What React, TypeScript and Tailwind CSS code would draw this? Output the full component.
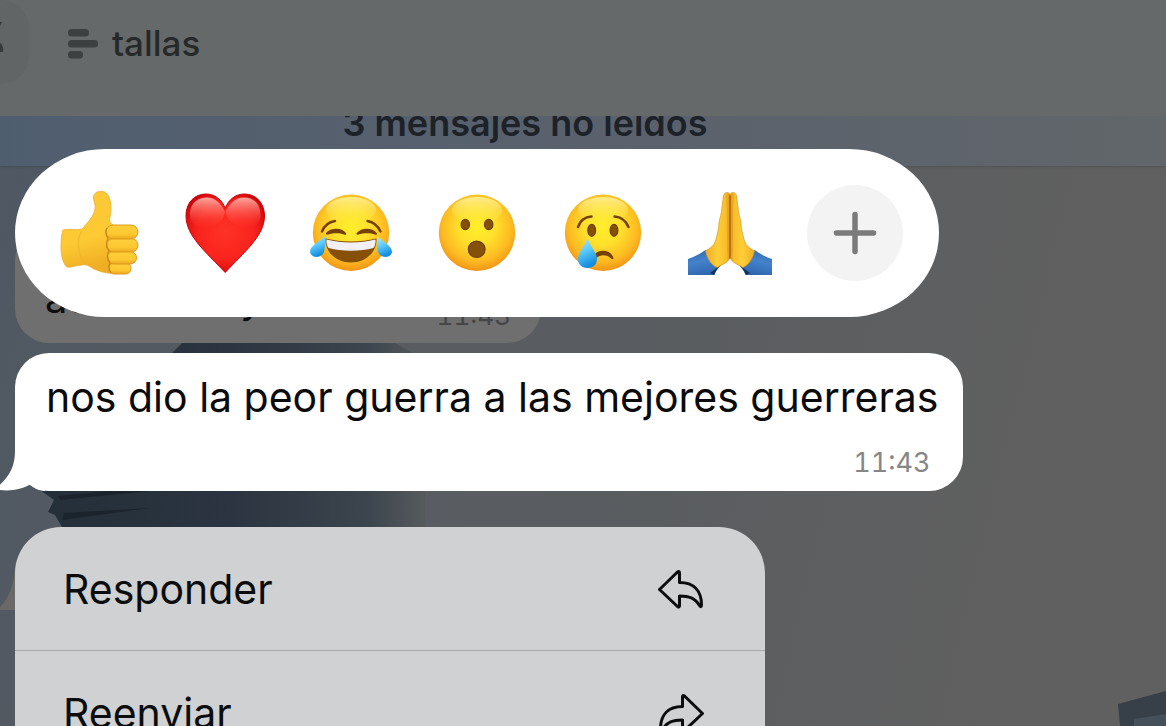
import type { ReactNode } from "react";

function Emoji({ children }: { children: ReactNode }) {
  return (
    <svg viewBox="0 0 84 84" className="size-[84px] overflow-visible" aria-hidden="true">
      {children}
    </svg>
  );
}

function Defs() {
  return (
    <svg className="absolute size-0" aria-hidden="true">
      <defs>
        <radialGradient id="face" cx="0.5" cy="0.42" r="0.6">
          <stop offset="0" stopColor="#ffee2b" />
          <stop offset="0.4" stopColor="#fee02b" />
          <stop offset="0.75" stopColor="#fcbb22" />
          <stop offset="0.93" stopColor="#f49c17" />
          <stop offset="1" stopColor="#e98811" />
        </radialGradient>
        <linearGradient id="shine" x1="0" y1="0" x2="0" y2="1">
          <stop offset="0" stopColor="#fff6a8" stopOpacity="0.8" />
          <stop offset="1" stopColor="#ffee50" stopOpacity="0" />
        </linearGradient>
        <linearGradient id="skin" x1="0" y1="0" x2="0.2" y2="1">
          <stop offset="0" stopColor="#fbc838" />
          <stop offset="0.65" stopColor="#fdca33" />
          <stop offset="1" stopColor="#f0ae24" />
        </linearGradient>
        <linearGradient id="finger" x1="0" y1="0" x2="0" y2="1">
          <stop offset="0" stopColor="#fdcf3a" />
          <stop offset="0.65" stopColor="#fdc832" />
          <stop offset="1" stopColor="#eba71f" />
        </linearGradient>
        <radialGradient id="heart" cx="0.5" cy="0.48" r="0.6">
          <stop offset="0" stopColor="#ff3226" />
          <stop offset="0.6" stopColor="#f9231d" />
          <stop offset="0.9" stopColor="#d90b0d" />
          <stop offset="1" stopColor="#bd0209" />
        </radialGradient>
        <linearGradient id="gloss" x1="0" y1="0" x2="0" y2="1">
          <stop offset="0" stopColor="#ffb9b0" stopOpacity="0.9" />
          <stop offset="0.5" stopColor="#ff7066" stopOpacity="0.55" />
          <stop offset="1" stopColor="#ff3a30" stopOpacity="0" />
        </linearGradient>
        <linearGradient id="tear" x1="0" y1="0" x2="0.3" y2="1">
          <stop offset="0" stopColor="#b5ecff" />
          <stop offset="0.5" stopColor="#5ccbfa" />
          <stop offset="1" stopColor="#138de0" />
        </linearGradient>
        <linearGradient id="sleeve" x1="0" y1="0" x2="0.3" y2="1">
          <stop offset="0" stopColor="#2d66ad" />
          <stop offset="0.5" stopColor="#4383cc" />
          <stop offset="1" stopColor="#3169b0" />
        </linearGradient>
        <linearGradient id="palm" x1="0" y1="0" x2="1" y2="0">
          <stop offset="0" stopColor="#eead25" />
          <stop offset="0.5" stopColor="#fecf37" />
          <stop offset="0.85" stopColor="#f9bd2a" />
          <stop offset="1" stopColor="#d99018" />
        </linearGradient>
      </defs>
    </svg>
  );
}

function Face() {
  return (
    <>
      <circle cx="41" cy="41.7" r="38.2" fill="url(#face)" />
      <ellipse cx="41" cy="19" rx="25" ry="13" fill="url(#shine)" />
    </>
  );
}

function ThumbsUp() {
  return (
    <Emoji>
      <path
        d="M5 39C10 37 18 40 24 38C30 31 36 25 37 18C38 12 34 8 36 4C38 0 44-1 48 2C53 6 54 17 52 26C51 30 52 32 55 34L60 52L58 82C50 83 43 81 36 78C31 75 28 73 24 74C18 74 14 77 9 76C5 73 3 64 3 56C3 49 4 41 5 39Z"
        fill="url(#skin)"
        stroke="#ecad2b"
        strokeWidth="0.8"
      />
      <path d="M24 40C18 48 20 65 27 73" fill="none" stroke="#eeb12a" strokeWidth="1.5" opacity="0.6" />
      <g fill="url(#finger)" stroke="#dd9a1c" strokeWidth="1">
        <rect x="50.5" y="72" width="22.5" height="11" rx="5.5" />
        <rect x="49" y="60.5" width="29.5" height="12.5" rx="6.2" />
        <rect x="48.5" y="47.5" width="31.5" height="13.5" rx="6.7" />
        <rect x="48" y="34" width="32" height="14" rx="7" />
      </g>
      <path
        d="M49 37C46 42 49 45 50 48C47 53 49 57 51 60C48 65 50 69 52 72C50 76 51 79 53 82"
        fill="none"
        stroke="#c98216"
        strokeWidth="1.2"
      />
    </Emoji>
  );
}

function Heart() {
  return (
    <Emoji>
      <path
        d="M41.2 17.5C38 8 30 3 22 3C10 3 2 12 2 25C2 45 22 61 41.2 81.500C60 61 80.500 45 80.500 25C80.500 12 72 3 60.500 3C52 3 44.500 8 41.2 17.5Z"
        fill="url(#heart)"
        stroke="#c4060b"
        strokeWidth="1"
      />
      <path d="M6 24C6 11 15 6.500 23 6.500C31 6.500 37 12 41 21C40 30 30 36 20 37C13 38 6 33 6 24Z" fill="url(#gloss)" />
      <path d="M76.500 24C76.500 11 67.500 6.500 60 6.500C51.500 6.500 45.500 12 41.500 21C43 30 53 36 62.500 37C69.500 38 76.500 33 76.500 24Z" fill="url(#gloss)" />
    </Emoji>
  );
}

function Joy() {
  return (
    <Emoji>
      <Face />
      <g fill="none" stroke="#754107" strokeLinecap="round">
        <path d="M12 40.500C14 35 19 31 25 30" strokeWidth="2.400" />
        <path d="M57.500 30C63 31 68 35 70.500 40.500" strokeWidth="2.400" />
      </g>
      <path d="M16 42C20 36.500 32 36 36 42C37 44 35 44 34 43.500C29 41.500 23 42 18 43.500C16.500 44 15.500 43 16 42Z" fill="#754107" />
      <path d="M46.700 42C51 36.500 62.500 36 66.700 42C67.500 44 66 44 65 43.500C60 41.500 53 42 48.500 43.500C47 44 46 43.500 46.700 42Z" fill="#754107" />
      <path d="M15.500 47.500C32 51.500 50 51.500 66.500 47.500C67 61 56 71.500 41 71.500C26 71.500 15 61 15.500 47.500Z" fill="#865009" />
      <path d="M16.500 48.500C32 52.500 50 52.500 65.500 48.500C66 51 65 55 63.500 57C50 60.500 32 60.500 18.500 57C17 55 16 51 16.500 48.500Z" fill="#f2f0f4" />
      <path d="M15 45.500C8 51 0 55 0 61C1 67 10 68 13.500 62C15.500 58 15 51 15 45.500Z" fill="url(#tear)" />
      <path d="M67 45.500C74 51 82 55 82 61C81 67 72 68 68.500 62C66.500 58 67 51 67 45.500Z" fill="url(#tear)" />
    </Emoji>
  );
}

function Surprised() {
  return (
    <Emoji>
      <Face />
      <g fill="#855008" stroke="#70400a" strokeWidth="1.2">
        <ellipse cx="29.300" cy="33.500" rx="4.200" ry="5.200" />
        <ellipse cx="52.700" cy="33.500" rx="4.200" ry="5.200" />
        <ellipse cx="40.700" cy="58.300" rx="8.400" ry="8.200" />
      </g>
    </Emoji>
  );
}

function Crying() {
  return (
    <Emoji>
      <Face />
      <g fill="none" stroke="#754107" strokeLinecap="round" strokeWidth="2.500">
        <path d="M16 36C18 30 23 26 29.500 25.500" />
        <path d="M52.500 25.500C59 26 64 30 66.500 36" />
      </g>
      <g fill="#855008" stroke="#70400a" strokeWidth="1.200">
        <ellipse cx="29.700" cy="39.300" rx="3.900" ry="6" />
        <ellipse cx="52" cy="39.300" rx="3.900" ry="6" />
      </g>
      <path d="M33 63C38 57.500 50 59 51.500 67.500C51 69 49.500 68 48 66.500C44 63.500 38 63.500 34.500 67Z" fill="#754107" />
      <path d="M25.500 46.500C23.500 55 16 61 16 68C16 80 35 80 35 68C35 61 27.500 55 25.500 46.500Z" fill="url(#tear)" />
    </Emoji>
  );
}

function HalfPray() {
  return (
    <>
      <path d="M0 68C6 66 12 63 17.500 59L30 76L35 72C31 76 28 79 26.500 84H0Z" fill="url(#sleeve)" />
      <path d="M29 77L35.500 71.500C31 76 28 79 26 84L22 82Z" fill="#12335f" />
      <path
        d="M42 4C41 0 36 1 35.500 5L34 16C34 22 31.500 27 31 32C31 38 29 44 27.500 50C26 55 21 58 17.500 60C19 67 23 74 29 76.500C35 73 42 71 42 65Z"
        fill="url(#palm)"
        stroke="#d9951b"
        strokeWidth="0.700"
      />
      <path d="M38 3C40 10 39 30 40 62" fill="none" stroke="#e5a021" strokeWidth="0.800" />
    </>
  );
}

function Pray() {
  return (
    <Emoji>
      <HalfPray />
      <g transform="matrix(-1 0 0 1 84 0)">
        <HalfPray />
      </g>
      <path d="M42 5V67" stroke="#a8600b" strokeWidth="1.300" strokeLinecap="round" />
    </Emoji>
  );
}

function ReplyIcon({ flipped = false }: { flipped?: boolean }) {
  return (
    <svg viewBox="0 0 48 40" className={flipped ? "h-10 w-12 -scale-x-100" : "h-10 w-12"} aria-hidden="true">
      <path
        d="M2.500 20.500L20.500 3Q22.500 1.500 22.500 4V13.500C37 13.500 44.500 22 44.500 36Q44.500 39 42.500 36.500C38 29 32 27 22.500 27V36.500Q22.500 39 20.500 37.500Z"
        fill="none"
        stroke="#0b0c0d"
        strokeWidth="3"
        strokeLinejoin="round"
      />
    </svg>
  );
}

function Wallpaper() {
  return (
    <svg
      viewBox="0 0 1166 726"
      preserveAspectRatio="xMinYMin slice"
      className="absolute inset-0 size-full"
      aria-hidden="true"
    >
      <defs>
        <linearGradient id="sky" x1="0" y1="0" x2="1" y2="0.150">
          <stop offset="0" stopColor="#4e5863" />
          <stop offset="0.350" stopColor="#585b60" />
          <stop offset="0.650" stopColor="#5a5d60" />
          <stop offset="0.850" stopColor="#5e5f60" />
          <stop offset="1" stopColor="#606060" />
        </linearGradient>
        <linearGradient id="roof" x1="0" y1="0" x2="1" y2="0">
          <stop offset="0" stopColor="#242f39" />
          <stop offset="0.500" stopColor="#2b3440" />
          <stop offset="0.850" stopColor="#3c454d" />
          <stop offset="1" stopColor="#565a5d" />
        </linearGradient>
      </defs>
      <rect width="1166" height="726" fill="url(#sky)" />
      <path d="M182 343H395L425 360V527H62L55 515L48 512L54 500L40 490L172 353Z" fill="url(#roof)" />
      <path d="M60 500L150 491H110L58 496Z" fill="#1b242d" />
      <path d="M62 520L150 508L64 513Z" fill="#1b242d" />
      <path d="M16 560V610H0V607C10 597 14 585 16 560Z" fill="#6a6967" />
      <path d="M1118 704L1166 691V726H1120Z" fill="#373f48" />
      <path d="M1134 719L1166 714V726H1134Z" fill="#46505a" />
    </svg>
  );
}

function ChatBackdrop() {
  return (
    <div className="relative overflow-hidden [grid-area:1/1]" aria-hidden="true">
      <Wallpaper />
      <div className="relative z-10 flex h-[116px] bg-[#656969]">
        <div className="flex h-[84px] w-[29px] items-center rounded-r-[28px] bg-[#616565]">
          <svg viewBox="0 0 6 40" className="h-10 w-1.5">
            <path d="M0 0L2 0L0 4ZM0 21C2 22 4 26 3 30H0Z" fill="#37393a" />
          </svg>
        </div>
        <div className="flex h-[88px] items-center gap-3.5 pl-[39px]">
          <svg viewBox="0 0 30 30" className="size-[30px]">
            <g fill="#3d4041">
              <rect y="0" width="21" height="7.500" rx="3.500" />
              <rect y="11" width="30" height="7.500" rx="3.500" />
              <rect y="22" width="15" height="7.500" rx="3.500" />
            </g>
          </svg>
          <span className="pb-0.5 text-[35px] leading-[40px] font-medium text-[#26292a]">tallas</span>
        </div>
      </div>
      <div className="relative -mt-9 flex h-[86px] items-center justify-center bg-linear-to-r from-[#4f5e6f] via-[#5a616d] to-[#61666a] pr-[116px] shadow-sm">
        <span className="text-[36px] leading-[40px] font-semibold text-[#1d2229]">3 mensajes no leídos</span>
      </div>
      <div className="relative mt-[61px] ml-[15px] flex h-[116px] w-[526px] items-end justify-between rounded-[34px] bg-[#6f6f6f] px-[30px] pb-3">
        <span className="pb-2 text-[40px] leading-[48px] text-[#0c0c0c]">aún es muy</span>
        <span className="text-[26px] leading-[30px] text-[#454545] tabular-nums">11:43</span>
      </div>
    </div>
  );
}

const reactions = [
  { name: "Me gusta", art: <ThumbsUp /> },
  { name: "Me encanta", art: <Heart /> },
  { name: "Me divierte", art: <Joy /> },
  { name: "Me sorprende", art: <Surprised /> },
  { name: "Me entristece", art: <Crying /> },
  { name: "Gracias", art: <Pray /> },
];

export default function App() {
  return (
    <div className="grid h-screen grid-cols-1 grid-rows-1 overflow-hidden bg-[#5c5e60] font-['Inter',sans-serif]">
      <Defs />
      <ChatBackdrop />
      <main className="relative z-20 flex min-h-0 flex-col items-start gap-9 pt-[149px] pl-[15px] [grid-area:1/1]">
        <div className="flex h-[168px] shrink-0 items-center gap-[35px] rounded-[90px/84px] bg-white pr-9 pl-[43px]">
          <div className="flex gap-[42px]">
            {reactions.map((r) => (
              <button key={r.name} type="button" aria-label={r.name}>
                {r.art}
              </button>
            ))}
          </div>
          <button
            type="button"
            aria-label="Más reacciones"
            className="flex size-24 items-center justify-center rounded-full bg-[#f3f3f3]"
          >
            <svg viewBox="0 0 44 44" className="size-11" aria-hidden="true">
              <path d="M22 3.500V40.500M3.500 22H40.500" stroke="#7b7b7b" strokeWidth="5.500" strokeLinecap="round" />
            </svg>
          </button>
        </div>

        <article className="relative flex h-[138px] shrink-0 flex-col rounded-[34px] bg-white pt-5 pr-6 pl-[31px]">
          <svg viewBox="0 0 50 40" className="absolute bottom-0 -left-5 h-10 w-[50px]" aria-hidden="true">
            <path d="M20 0C20 16 14 27 0 38C12 41 26 39 35 33.500C40 38 45 40 50 40V0Z" fill="#fff" />
          </svg>
          <p className="relative text-[41px] leading-[48px] whitespace-nowrap text-[#0b0b0b]">
            nos dio la peor guerra a las mejores guerreras
          </p>
          <time className="relative mt-6 self-end pr-2 text-[27px] leading-[36px] text-[#868686] tabular-nums">
            11:43
          </time>
        </article>

        <div className="w-[750px] max-w-full shrink-0 overflow-hidden rounded-[46px] bg-[#d0d1d3]">
          <button
            type="button"
            className="flex h-[124px] w-full items-center justify-between border-b border-[#a5a7a9] pr-[60px] pl-12 text-[41px] leading-[48px] text-[#0b0c0d]"
          >
            Responder
            <ReplyIcon />
          </button>
          <button
            type="button"
            className="flex h-[124px] w-full items-center justify-between pr-[60px] pl-12 text-[41px] leading-[48px] text-[#0b0c0d]"
          >
            Reenviar
            <ReplyIcon flipped />
          </button>
        </div>
      </main>
    </div>
  );
}
